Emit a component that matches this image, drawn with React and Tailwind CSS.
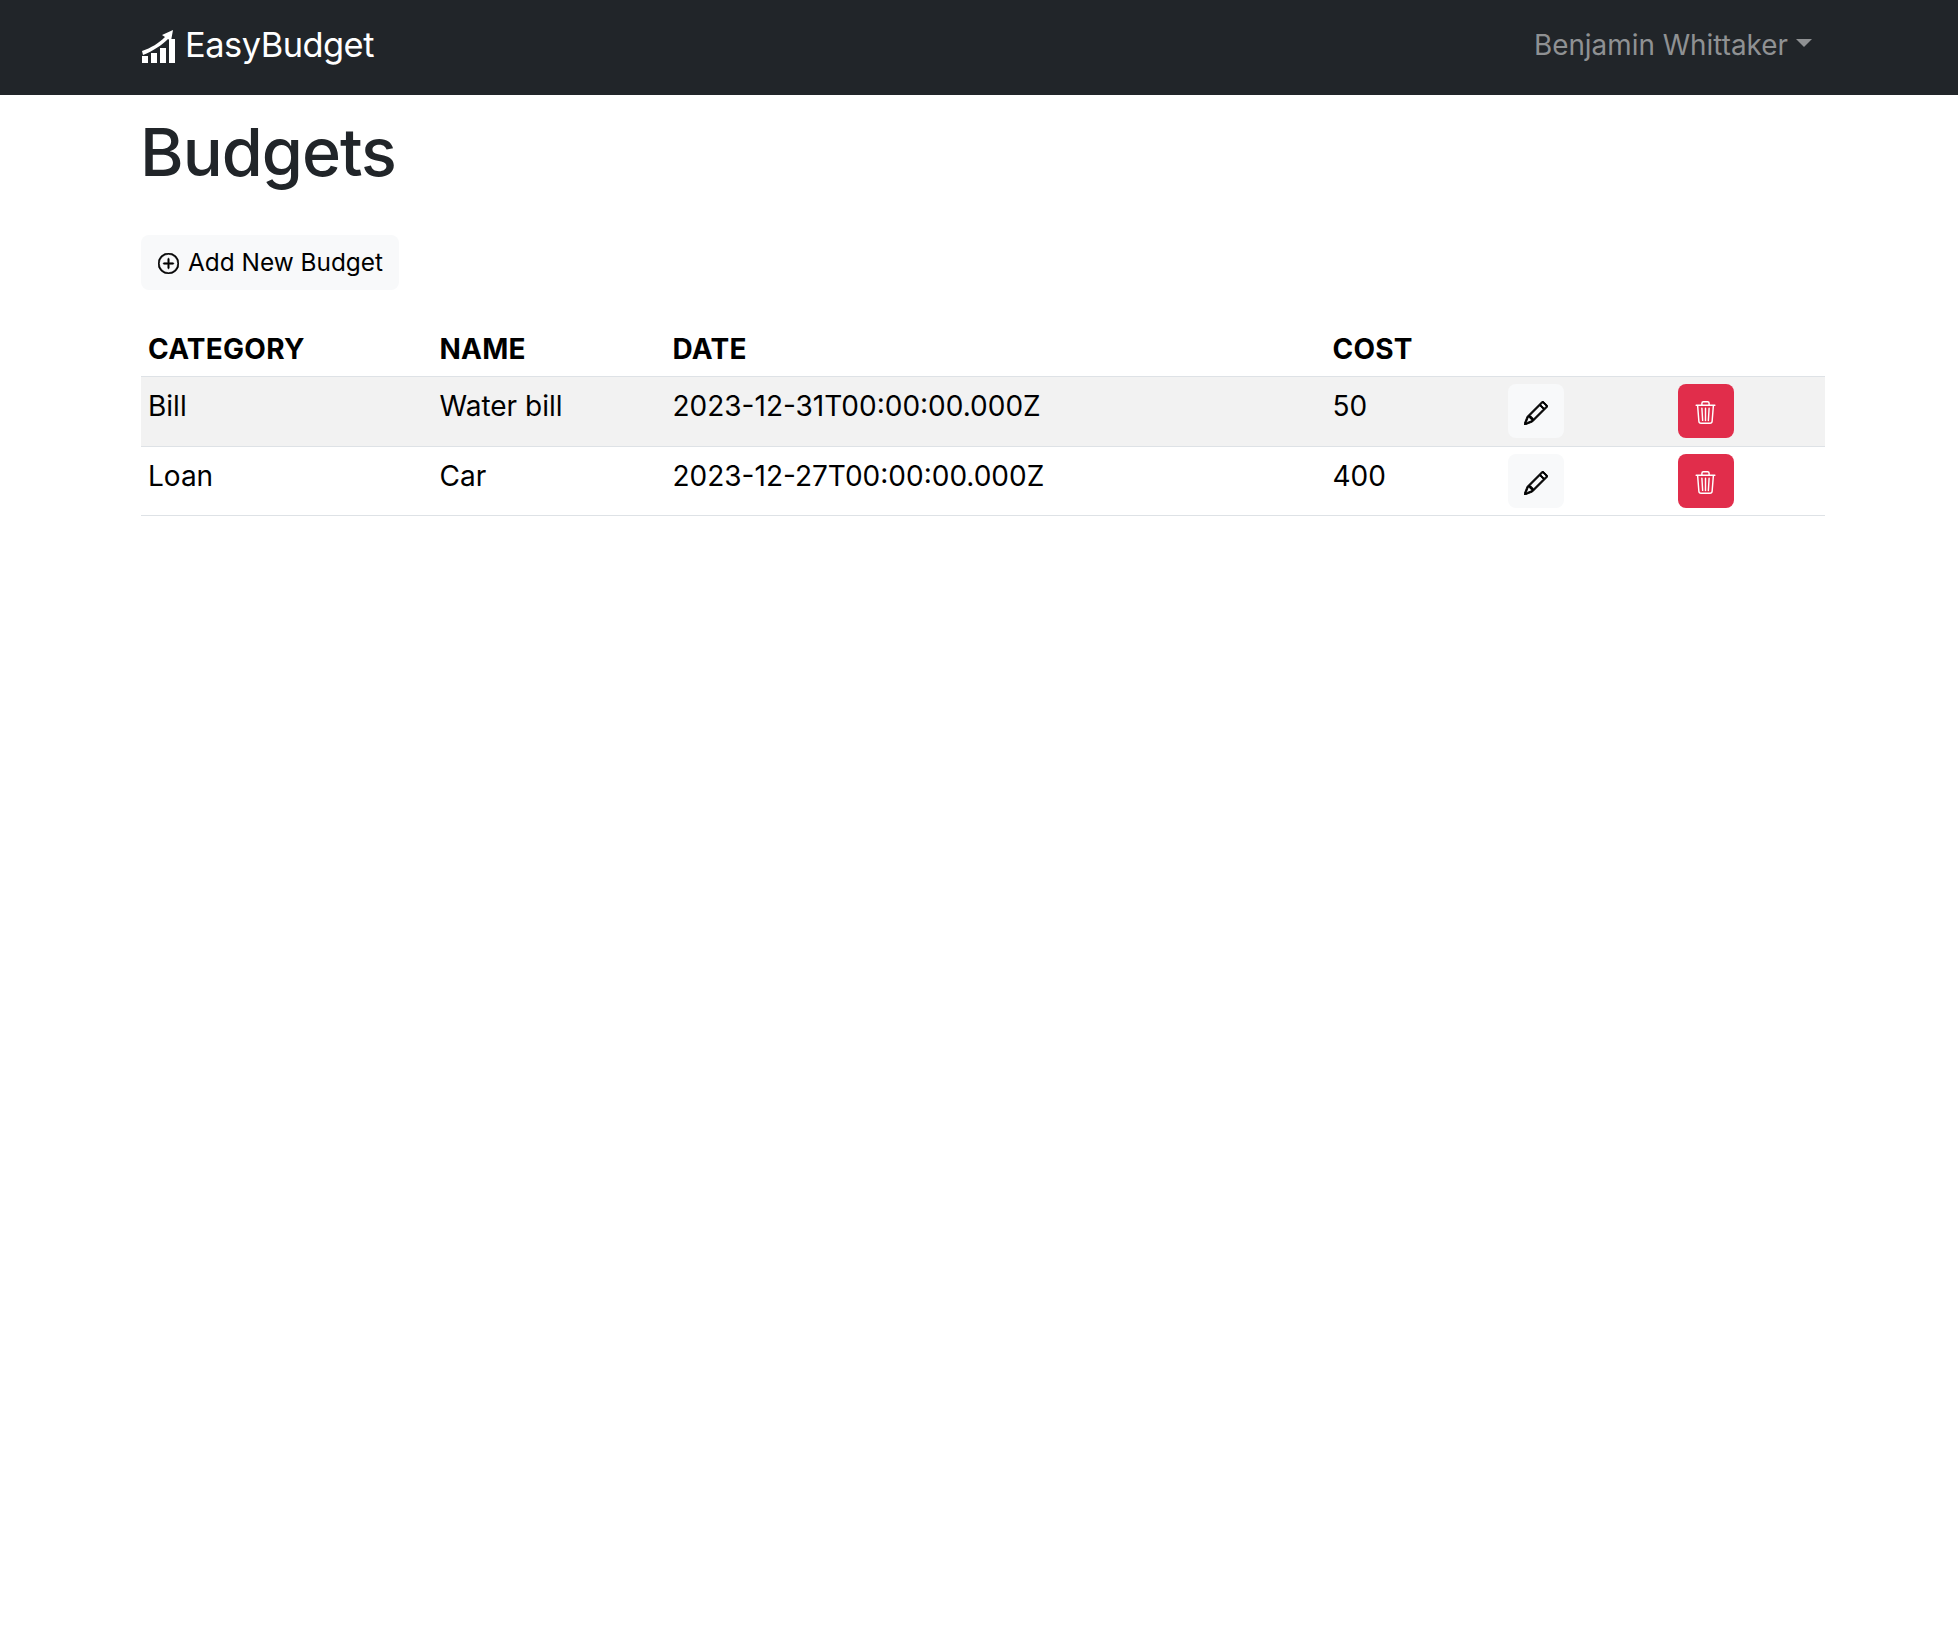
import { BsPencil, BsPlusCircle, BsTrash3 } from "react-icons/bs";

const budgets = [
  { id: 1, category: "Bill", name: "Water bill", date: "2023-12-31T00:00:00.000Z", cost: 50 },
  { id: 2, category: "Loan", name: "Car", date: "2023-12-27T00:00:00.000Z", cost: 400 },
];

function Logo() {
  return (
    <svg width="33" height="33" viewBox="0 0 33 33" fill="white" className="ml-[1px] mr-[10px] mt-[3px]">
      <rect x="0" y="26" width="6" height="7" />
      <rect x="9" y="23" width="6" height="10" />
      <rect x="18" y="18" width="6" height="15" />
      <rect x="27" y="9" width="6" height="24" />
      <path d="M0 21 C9 18 17 13 23 7 L20 5 L31 0 L29 11 L26 9 C20 15 11 21 1 25 Z" />
    </svg>
  );
}

function BudgetRow({ budget, striped }) {
  return (
    <tr className={`border-b border-[#dee2e6] ${striped ? "bg-[#f2f2f2]" : "bg-white"}`}>
      <td className="px-[7px] pt-[8px] align-top">{budget.category}</td>
      <td className="px-[7px] pt-[8px] align-top">{budget.name}</td>
      <td className="px-[7px] pt-[8px] align-top">{budget.date}</td>
      <td className="px-[7px] pt-[8px] align-top">{budget.cost}</td>
      <td className={`px-[7px] pt-[7px] align-top ${striped ? "pb-[8px]" : "pb-[7px]"}`}>
        <button className="flex h-[54px] w-[56px] items-center justify-center rounded-[8px] bg-[#f8f9fa] pl-[1px] pt-[4px] text-black">
          <BsPencil className="stroke-[0.6px] text-[24px]" />
        </button>
      </td>
      <td className={`px-[7px] pt-[7px] align-top ${striped ? "pb-[8px]" : "pb-[7px]"}`}>
        <button className="flex h-[54px] w-[56px] items-center justify-center rounded-[8px] bg-[#e12d4b] pt-[2px] text-white">
          <BsTrash3 className="text-[23px]" />
        </button>
      </td>
    </tr>
  );
}

export default function App() {
  return (
    <div className="min-h-[1636px] bg-white font-['Inter',sans-serif] text-[28px] text-black">
      <nav className="h-[95px] bg-[#212529]">
        <div className="flex h-[90px] items-center justify-between pl-[141px] pr-[146px]">
          <div className="flex items-center text-[34.400px] tracking-[-0.5px] text-white">
            <Logo />
            <span>EasyBudget</span>
          </div>
          <div className="mt-[1px] flex items-center text-[27.850px] text-[#8f9193]">
            Benjamin Whittaker
            <span className="ml-[8px] mb-[4px] h-0 w-0 border-x-[8px] border-t-[8px] border-x-transparent border-t-[#8f9193]" />
          </div>
        </div>
      </nav>
      <main className="pl-[141px] pr-[133px]">
        <h1 className="-ml-[1px] mt-[15px] text-[66.500px] font-medium leading-[84px] tracking-[-1px] text-[#212529]">Budgets</h1>
        <button className="mt-[41px] flex h-[55px] items-center rounded-[8px] bg-[#f8f9fa] pl-[17px] pr-[16px] text-[24.400px]">
          <BsPlusCircle className="mr-[9px] mt-[2px] stroke-[0.5px] text-[21px]" />
          Add New Budget
        </button>
        <table className="mt-[38px] w-full table-fixed border-collapse">
          <colgroup>
            <col className="w-[291.500px]" />
            <col className="w-[233px]" />
            <col className="w-[660px]" />
            <col className="w-[175px]" />
            <col className="w-[170px]" />
            <col />
          </colgroup>
          <thead>
            <tr className="border-b border-[#dee2e6] text-left">
              <th className="px-[7px] pb-[6px] font-bold tracking-[0.25px]">CATEGORY</th>
              <th className="px-[7px] pb-[6px] font-bold tracking-[0.25px]">NAME</th>
              <th className="px-[7px] pb-[6px] font-bold tracking-[0.25px]">DATE</th>
              <th className="px-[7px] pb-[6px] font-bold tracking-[0.25px]">COST</th>
              <th />
              <th />
            </tr>
          </thead>
          <tbody>
            {budgets.map((budget, i) => (
              <BudgetRow key={budget.id} budget={budget} striped={i === 0} />
            ))}
          </tbody>
        </table>
      </main>
    </div>
  );
}
